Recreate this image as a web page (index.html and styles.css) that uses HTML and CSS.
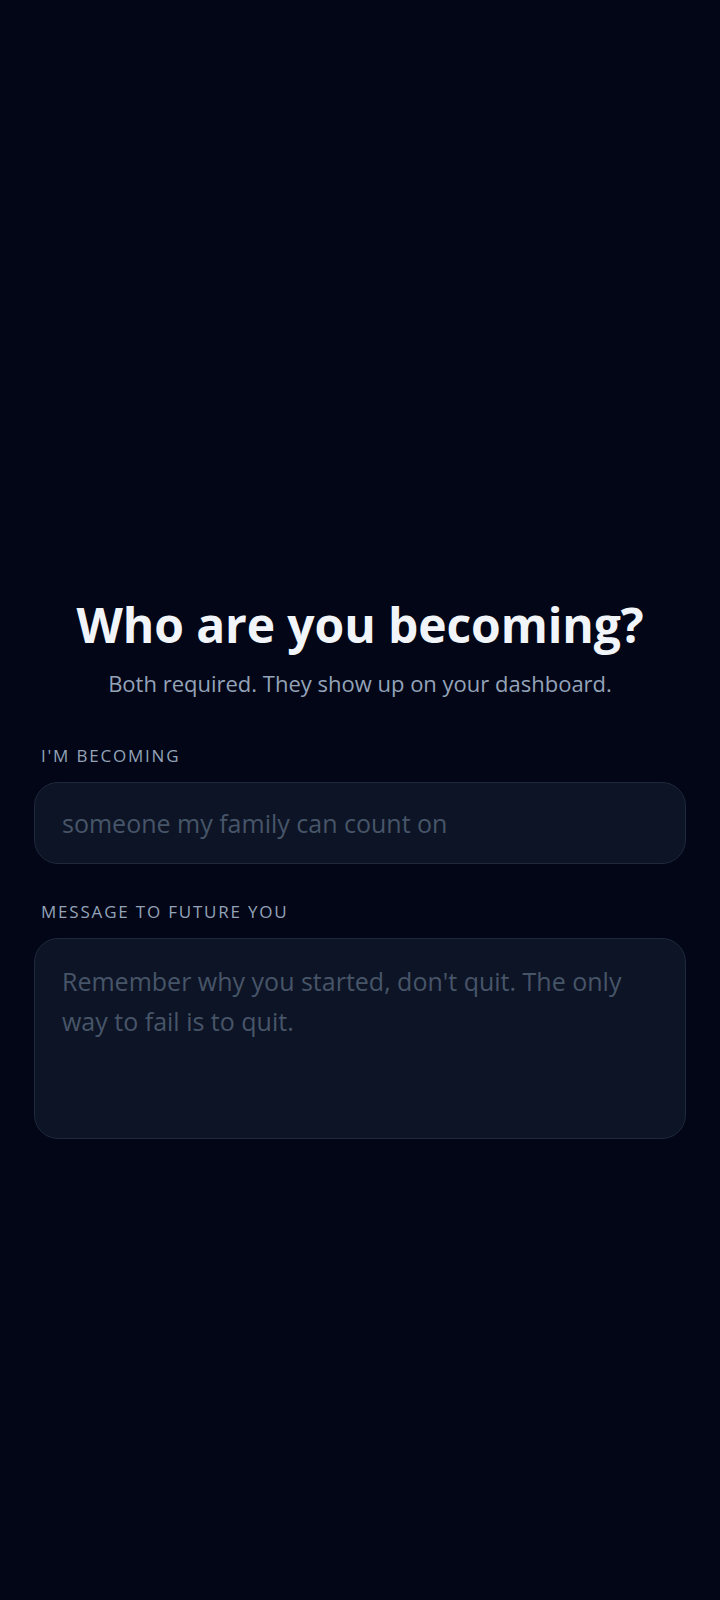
FILE: index.html
```html
<!DOCTYPE html>
<html lang="en">

<head>
    <meta charset="UTF-8">
    <meta name="viewport" content="width=device-width, initial-scale=1.0">
    <title>Who are you becoming?</title>
    <link rel="stylesheet" href="styles.css">
</head>

<body>
    <div class="page">
        <div class="intro">
            <h1 class="title">Who are you becoming?</h1>
            <p class="sub">Both required. They show up on your dashboard.</p>
        </div>

        <div class="field">
            <label class="label" for="becoming">I'm becoming</label>
            <input class="box" id="becoming" type="text" placeholder="someone my family can count on">
        </div>

        <div class="field">
            <label class="label" for="message">Message to future you</label>
            <textarea class="box area" id="message" placeholder="Remember why you started, don't quit. The only way to fail is to quit."></textarea>
        </div>
    </div>
</body>

</html>
```

FILE: styles.css
```css
* {
    margin: 0;
    padding: 0;
    box-sizing: border-box;
}

body {
    background-color: #020617;
    font-family: "Open Sans", "Noto Sans", sans-serif;
    min-height: 1600px;
}

.page {
    padding: 593px 34px 0;
}

.intro {
    text-align: center;
    margin-bottom: 45px;
}

.title {
    color: #f1f5f9;
    font-size: 48px;
    font-weight: 700;
    line-height: 64px;
    letter-spacing: -0.1px;
}

.sub {
    color: #94a3b8;
    font-size: 22px;
    line-height: 32px;
    margin-top: 10px;
}

.field {
    margin-bottom: 36px;
}

.label {
    display: block;
    color: #94a3b8;
    font-size: 17px;
    letter-spacing: 1.8px;
    text-transform: uppercase;
    padding-left: 7px;
    margin-bottom: 15px;
}

.box {
    display: block;
    width: 100%;
    height: 82px;
    padding: 0 27px;
    background-color: #0d1425;
    border: 1px solid #1e293b;
    border-radius: 24px;
    color: #e2e8f0;
    font-family: inherit;
    font-size: 25px;
    outline: none;
}

.box::placeholder {
    color: #475569;
}

.area {
    height: 201px;
    padding: 22px 27px;
    line-height: 40px;
    resize: none;
}
```
